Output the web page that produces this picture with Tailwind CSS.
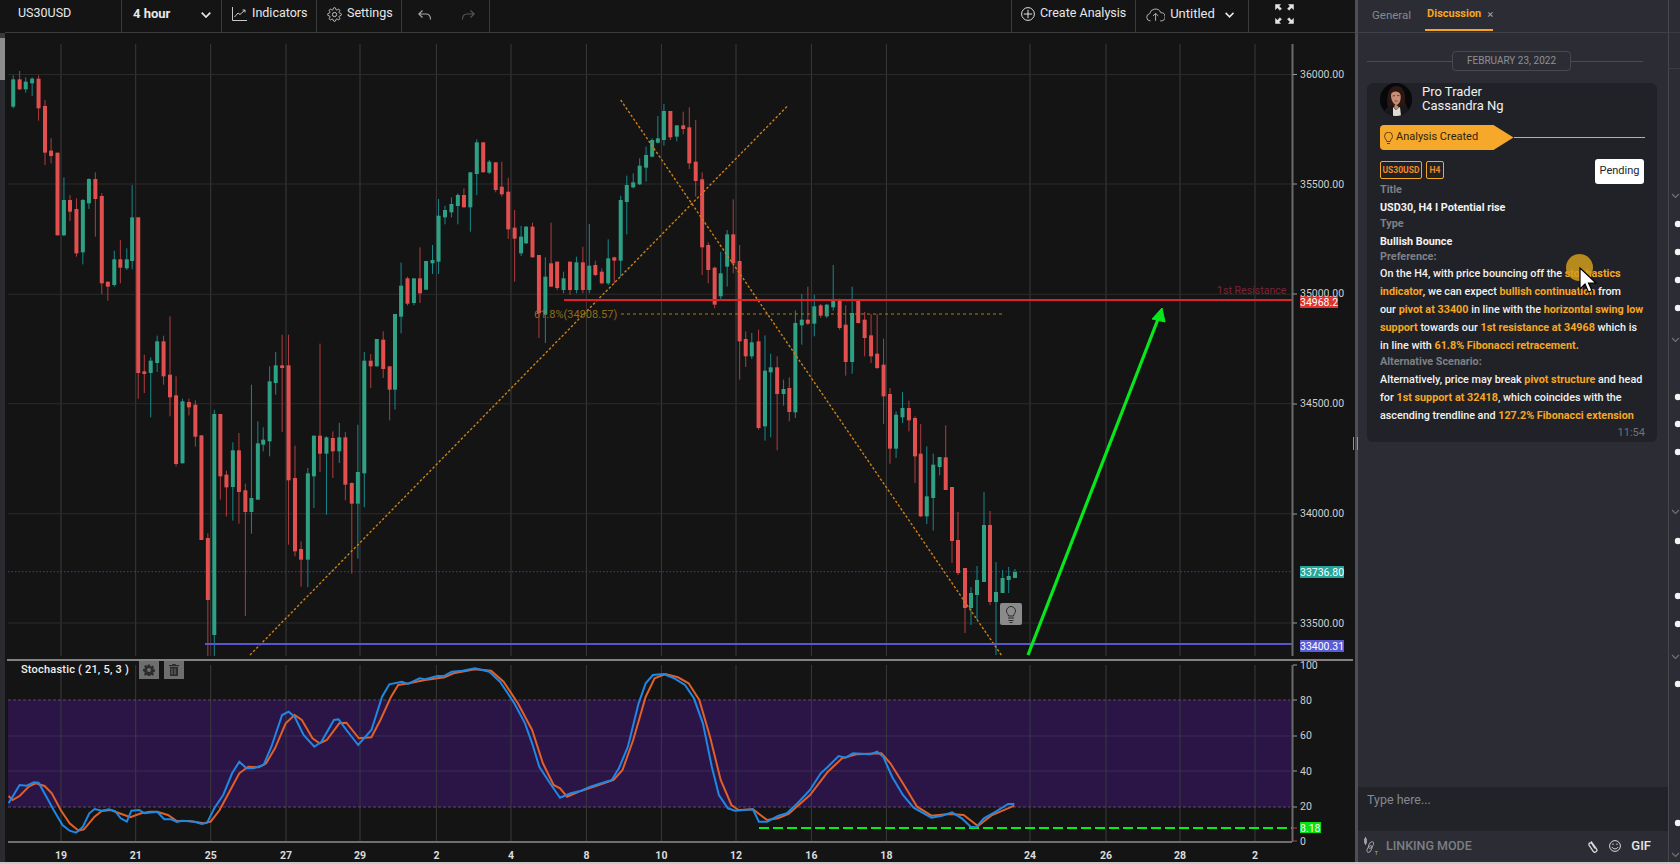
<!DOCTYPE html>
<html lang="en">
<head>
    <meta charset="UTF-8">
    <title>US30USD</title>
    <script src="https://cdn.jsdelivr.net/npm/@tailwindcss/browser@4"></script>
</head>
<body class="bg-[#141414] overflow-hidden font-[Roboto,sans-serif]">
<div class="relative flex w-[1680px] h-[864px] overflow-hidden">

    <!-- left rail -->
    <div class="w-[5px] flex flex-col">
        <div class="h-[33px] bg-[#141414]"></div>
        <div class="h-[5px] bg-[#3a3a3e]"></div>
        <div class="h-[42px] bg-[#8d8d8d]"></div>
        <div class="flex-1 bg-[#2a2b30]"></div>
    </div>

    <!-- chart column -->
    <div class="w-[1350px] flex flex-col">
        <header class="h-[33px] flex border-b border-[#3a3c3c] text-[12.500px] text-[#e8e8e8]">
            <div class="w-[117px] pl-[13px] pb-[5px] flex items-center border-r border-[#3a3c3c]">US30USD</div>
            <div class="w-[100px] pl-[11px] pr-[10px] pb-[3px] flex items-center justify-between border-r border-[#3a3c3c] font-bold text-[13px]">
                <span class="-mt-[2px]">4 hour</span>
                <svg width="10" height="6" viewBox="0 0 10 6" fill="none" stroke="#e8e8e8" stroke-width="1.700"><path d="M.7.7 5 5l4.300-4.300"/></svg>
            </div>
            <div class="w-[95px] pl-[10px] pb-[4px] flex items-center gap-[5px] border-r border-[#3a3c3c]">
                <svg width="15" height="14" viewBox="0 0 15 14" fill="none" stroke="#c8c8c8" stroke-width="1"><path d="M.5 0v13.500H15M2.500 10 6 6l2 1.500L13 3M10.500 3H13v2.500"/></svg>
                <span class="-mt-[1px]">Indicators</span>
            </div>
            <div class="w-[85px] pl-[10px] pb-[4px] flex items-center gap-[5px] border-r border-[#3a3c3c]">
                <svg width="15" height="15" viewBox="0 0 24 24" fill="none" stroke="#c8c8c8" stroke-width="1.600"><circle cx="12" cy="12" r="3.400"/><path d="M19.400 15a1.700 1.700 0 0 0 .3 1.800l.1.1a2 2 0 1 1-2.900 2.900l-.1-.1a1.700 1.700 0 0 0-2.800 1.200v.1a2 2 0 1 1-4 0V21a1.700 1.700 0 0 0-2.900-1.200l-.1.1a2 2 0 1 1-2.800-2.900l.1-.1a1.700 1.700 0 0 0-1.200-2.900H3a2 2 0 1 1 0-4h.1a1.700 1.700 0 0 0 1.200-2.800l-.1-.1a2 2 0 1 1 2.900-2.900l.1.1a1.700 1.700 0 0 0 1.800.3H9a1.700 1.700 0 0 0 1-1.500V3a2 2 0 1 1 4 0v.1a1.700 1.700 0 0 0 2.900 1.200l.1-.1a2 2 0 1 1 2.800 2.900l-.1.1a1.700 1.700 0 0 0-.3 1.800V9a1.700 1.700 0 0 0 1.500 1H21a2 2 0 1 1 0 4h-.1a1.700 1.700 0 0 0-1.500 1z"/></svg>
                <span class="-mt-[1px]">Settings</span>
            </div>
            <div class="w-[88px] pl-[16px] pb-[3px] flex items-center gap-[31px] border-r border-[#3a3c3c]">
                <svg width="13" height="10" viewBox="0 0 13 10" fill="none" stroke="#a8a8a8" stroke-width="1.100"><path d="M4.500.5.8 4l3.700 3.500M.8 4H8c2.800 0 4.500 2 4.500 5.500"/></svg>
                <svg width="13" height="10" viewBox="0 0 13 10" fill="none" stroke="#565656" stroke-width="1.100"><path d="M8.500.5 12.200 4 8.500 7.500M12.200 4H5C2.200 4 .5 6 .5 9.500"/></svg>
            </div>
            <div class="flex-1"></div>
            <div class="w-[124px] pl-[9px] pb-[4px] flex items-center gap-[5px] border-l border-[#3a3c3c]">
                <svg width="14" height="14" viewBox="0 0 14 14" fill="none" stroke="#e0e0e0" stroke-width="1"><circle cx="7" cy="7" r="6.400"/><path d="M7 2.800v8.400M2.800 7h8.400"/></svg>
                <span class="-mt-[1px]">Create Analysis</span>
            </div>
            <div class="w-[113px] pl-[10px] pr-[14px] pb-[4px] flex items-center border-l border-[#3a3c3c] text-[13px]">
                <svg width="21" height="15" viewBox="0 0 21 15" fill="none" stroke="#c0c0c0" stroke-width="1"><path d="M5 14.500H4.500A4 4 0 0 1 4 6.600 6.400 6.400 0 0 1 16.200 5.500 4.500 4.500 0 0 1 16.500 14.500H15.500M10.500 14.500V6.500M7.700 9 10.500 6.300 13.300 9"/></svg>
                <span class="ml-[5px] -mt-[1px]">Untitled</span>
                <svg class="ml-[10px] mt-[2px]" width="10" height="6" viewBox="0 0 10 6" fill="none" stroke="#e8e8e8" stroke-width="1.700"><path d="M.7.7 5 5l4.300-4.300"/></svg>
            </div>
            <div class="w-[107px] pl-[26px] pb-[4px] flex items-center border-l border-[#3a3c3c]">
                <svg width="19" height="20" viewBox="0 0 19 20" fill="#e4e4e4" stroke="#e4e4e4" stroke-width=".5">
                    <path d="M.5.5h5L4 2.200 6.500 4.800 5 6.300 2.400 3.800.5 5.500zM18.500.5h-5L15 2.200l-2.500 2.600L14 6.300l2.600-2.500 1.900 1.700zM.5 19.500h5L4 17.800l2.500-2.600L5 13.700l-2.600 2.500-1.900-1.700zM18.500 19.500h-5l1.500-1.700-2.500-2.600 1.500-1.500 2.600 2.500 1.900-1.700z"/>
                </svg>
            </div>
        </header>

        <div class="relative flex-1">
            <svg id="chart" class="block" width="1350" height="831" viewBox="5 33 1350 831">
                <rect x="8" y="700" width="1284" height="107" fill="#2b1546"/>
                <g id="grid"></g>
                <path d="M8 700H1290M8 807H1290" stroke="#5d4a62" stroke-width="1.200" stroke-dasharray="3 2" fill="none"/>
                <path d="M8 736H1290M8 771H1290" stroke="#3f2a58" stroke-width="1"/>
                <path d="M8 571.700H1292" stroke="#4a3f8f" stroke-width="1" stroke-dasharray="1.500 2"/>
                <g id="candles"></g>
                <path d="M250 655 787.500 106M620.700 100 1002 656" stroke="#cc8015" stroke-width="1.400" stroke-dasharray="2.500 2" fill="none"/>
                <path d="M621 314H1002" stroke="#a87c1c" stroke-width="1" stroke-dasharray="3 3"/>
                <path d="M564 300H1292" stroke="#e0202a" stroke-width="1.800"/>
                <path d="M205 644H1292" stroke="#5a55d0" stroke-width="2"/>
                <path d="M1028 655 1160 314" stroke="#06e81c" stroke-width="3.200" fill="none"/>
                <path d="M1152 319 1162 308 1165 322z" fill="#06e81c" stroke="#06e81c"/>
                <path d="M759 828H1293" stroke="#06ee14" stroke-width="2" stroke-dasharray="10 4"/>
                <g id="stoch"></g>
                <path d="M1292.500 44V656M1292.500 665V842" stroke="#6a6a6a" stroke-width="2"/>
                <path d="M8 842H1292" stroke="#6f6f6f" stroke-width="2"/>
                <path d="M7 660H1353" stroke="#f0f0f0" stroke-width="1.200"/>
                <path d="M1293 74.500h4M1293 184h4M1293 294h4M1293 404h4M1293 514h4M1293 623h4M1293 665h4M1293 700h4M1293 736h4M1293 771h4M1293 807h4" stroke="#999"/>
                <path d="M1293 828h4M1293 841h4" stroke="#c8382f"/>
                <rect x="1000" y="603" width="22" height="22" rx="2" fill="#8b8b8b"/>
                <path d="M1008 618h6M1008.500 620.500h5M1009.500 622.500h3M1008.500 616c0-2-2-2.500-2-5a4.500 4.500 0 0 1 9 0c0 2.500-2 3-2 5z" fill="none" stroke="#222" stroke-width=".9"/>
                <rect x="1300" y="296" width="38" height="12" fill="#de3330"/>
                <rect x="1300" y="566" width="44" height="12" fill="#26a69a"/>
                <rect x="1300" y="640" width="44" height="12" fill="#5b5bd6"/>
                <rect x="1300" y="822" width="21" height="11" fill="#06e014"/>
                <g class="text-[10.500px] fill-[#cfcfcf]">
                    <text x="1300" y="78">36000.00</text>
                    <text x="1300" y="188">35500.00</text>
                    <text x="1300" y="297">35000.00</text>
                    <text x="1300" y="407">34500.00</text>
                    <text x="1300" y="517">34000.00</text>
                    <text x="1300" y="627">33500.00</text>
                    <text x="1300" y="669">100</text>
                    <text x="1300" y="704">80</text>
                    <text x="1300" y="739">60</text>
                    <text x="1300" y="775">40</text>
                    <text x="1300" y="810">20</text>
                    <text x="1300" y="845">0</text>
                </g>
                <g class="text-[10.500px] fill-white">
                    <text x="1300" y="306">34968.2</text>
                    <text x="1300" y="575.500">33736.80</text>
                    <text x="1300" y="649.500">33400.31</text>
                    <text x="1300" y="831.500">8.18</text>
                </g>
                <text x="1217" y="294" class="text-[10.600px] fill-[#7d2338]">1st Resistance</text>
                <text x="534" y="318" class="text-[11px] fill-[#8f6c18]">61.8%(34908.57)</text>
                <g id="dates" class="text-[10.500px] font-bold fill-[#dcdcdc]" text-anchor="middle"></g>
            </svg>

            <div class="absolute left-[16px] top-[628px] flex items-center gap-[5px]">
                <span class="w-[113px] text-[11px] font-medium tracking-[0.2px] text-[#f0f0f0]">Stochastic ( 21, 5, 3 )</span>
                <div class="w-[20px] h-[18px] bg-[#6e6e6e] flex items-center justify-center">
                    <svg width="12" height="12" viewBox="0 0 24 24" fill="#2c2c2c"><path d="M10 1h4l.6 3.200 2 .8 2.700-1.800 2.800 2.800-1.800 2.700.8 2 3.200.6v4l-3.200.6-.8 2 1.800 2.700-2.800 2.800-2.700-1.800-2 .8-.6 3.200h-4l-.6-3.200-2-.8-2.700 1.800-2.800-2.800 1.800-2.700-.8-2L0 14v-4l3.200-.6.8-2L2.200 4.700 5 1.900l2.700 1.800 2-.8zM12 8a4 4 0 1 0 0 8 4 4 0 0 0 0-8z"/></svg>
                </div>
                <div class="w-[20px] h-[18px] bg-[#6e6e6e] flex items-center justify-center">
                    <svg width="10" height="12" viewBox="0 0 10 12" fill="#2c2c2c"><path d="M3.500 0h3l.5 1h3v1.200H0V1h3zM1 3h8v9H1zm1.500 1.500v6h1v-6zm3 0v6h1v-6z" fill-rule="evenodd"/></svg>
                </div>
            </div>
        </div>
    </div>

    <!-- discussion panel -->
    <aside class="w-[314px] flex flex-col bg-[#2c2d34] border-l-[3px] border-[#4d4f55]">
        <div class="h-[33px] px-[14px] flex gap-[14px] border-b border-[#3f4147] text-[11.500px]">
            <span class="pt-[7px] text-[#858990]">General</span>
            <div class="w-[68px] pl-[2px] pt-[6px] flex gap-[6px] border-b-2 border-[#f5a623] h-[31px]">
                <span class="text-[11px] font-bold text-[#f5a623]">Discussion</span>
                <span class="text-[#a0a3a8]">×</span>
            </div>
        </div>

        <div class="flex-1 px-[9px] pt-[18px]">
            <div class="flex items-center h-[20px] w-[276px]">
                <div class="w-[85px] h-px bg-[#4a4c53]"></div>
                <div class="w-[119px] h-[20px] pb-px flex items-center justify-center border border-[#464952] rounded-[4px] text-[10px] text-[#8d9096]">FEBRUARY 23, 2022</div>
                <div class="flex-1 h-px bg-[#4a4c53]"></div>
            </div>

            <div class="mt-[13px] w-[290px] h-[359px] bg-[#212227] rounded-[6px] pl-[13px] pr-[12px]">
                <div class="flex items-center gap-[10px] -mt-px">
                    <svg class="rounded-full" width="32" height="33" viewBox="0 0 32 33">
                        <rect width="32" height="33" fill="#08080a"/>
                        <path d="M8 24C6 15 8 3 16 3c8 0 10 8 9 15 0 4 3 7 3 10l-8 2z" fill="#2c1812"/>
                        <path d="M11 12c0-4 8-5 9.500 0 .7 4-.5 9-4 10-3.500-1-5.500-5-5.500-10z" fill="#c98e78"/>
                        <path d="M12.500 13l2.500-.4M17 12.600l2.500 0" stroke="#40201a" stroke-width=".7"/>
                        <path d="M14.500 18h3" stroke="#a33a44" stroke-width="1"/>
                        <path d="M3 33c1-7 5-10 10-11l3 4 5-4c5 1 8 4 9 11z" fill="#17181c"/>
                        <path d="M13 24l3 3 4-3 1 9h-8z" fill="#e3dcd5"/>
                        <path d="M15 21l4 3-2 3-3-2z" fill="#c08670"/>
                    </svg>
                    <div class="-mt-[2px] text-[13px] leading-[14px] text-[#f0f0f0]">Pro Trader<br>Cassandra Ng</div>
                </div>

                <div class="mt-[9px] flex items-center">
                    <div class="w-[135px] h-[25px] bg-[#f5a82a] pl-[4px] flex items-center gap-[3px] rounded-l-[4px] [clip-path:polygon(0_0,85%_0,100%_50%,85%_100%,0_100%)] text-[11px] text-[#2c2310]">
                        <svg width="9" height="12" viewBox="0 0 9 12" fill="none" stroke="#3a2c10" stroke-width=".8"><path d="M3 11.500h3M2.800 9.500h3.400M2.800 9.500C2.800 7.500.5 6.800.5 4.200a4 4 0 0 1 8 0C8.500 6.800 6.200 7.500 6.200 9.500"/></svg>
                        <span>Analysis Created</span>
                    </div>
                    <div class="w-[133px] h-px bg-[#f5a82a]"></div>
                </div>

                <div class="mt-[9px] flex justify-between items-start">
                    <div class="mt-[2px] flex gap-[4px] text-[8.500px] font-bold text-[#f08a24]">
                        <span class="w-[42px] h-[18px] flex items-center justify-center border border-[#f5a623] rounded-[2px]">US30USD</span>
                        <span class="w-[18px] h-[18px] flex items-center justify-center border border-[#f5a623] rounded-[2px]">H4</span>
                    </div>
                    <span class="w-[49px] h-[25px] mr-px flex items-center justify-center bg-white rounded-[3px] text-[11px] text-[#23242a]">Pending</span>
                </div>

                <div class="text-[10.800px] font-medium leading-[18px] whitespace-nowrap text-[#f2f2f2]">
                    <div class="-mt-px h-[14px] leading-[14px] font-bold text-[#7d8086]">Title</div>
                    <div class="mt-[2px] font-bold">USD30, H4 I Potential rise</div>
                    <div class="h-[14px] leading-[14px] font-bold text-[#7d8086]">Type</div>
                    <div class="mt-[2px] font-bold">Bullish Bounce</div>
                    <div class="-mt-px h-[14px] leading-[14px] font-bold text-[#7d8086]">Preference:</div>
                    <div class="mt-px">On the H4, with price bouncing off the <b class="text-[#f5a623]">stochastics</b></div>
                    <div><b class="text-[#f5a623]">indicator</b>, we can expect <b class="text-[#f5a623]">bullish continuation</b> from</div>
                    <div>our <b class="text-[#f5a623]">pivot at 33400</b> in line with the <b class="text-[#f5a623]">horizontal swing low</b></div>
                    <div><b class="text-[#f5a623]">support</b> towards our <b class="text-[#f5a623]">1st resistance at 34968</b> which is</div>
                    <div>in line with <b class="text-[#f5a623]">61.8% Fibonacci retracement.</b></div>
                    <div class="h-[14px] leading-[14px] font-bold text-[#7d8086]">Alternative Scenario:</div>
                    <div class="mt-[2px]">Alternatively, price may break <b class="text-[#f5a623]">pivot structure</b> and head</div>
                    <div>for <b class="text-[#f5a623]">1st support at 32418</b>, which coincides with the</div>
                    <div>ascending trendline and <b class="text-[#f5a623]">127.2% Fibonacci extension</b></div>
                    <div class="-mt-[1px] text-right text-[11px] font-normal text-[#6d7178]">11:54</div>
                </div>
            </div>
        </div>

        <div class="h-[44px] bg-[#222328] pl-[9px] pt-[4px] text-[12.500px] text-[#858890]">Type here...</div>
        <div class="h-[33px] flex items-center pl-[6px] pr-[17px] pb-[3px]">
            <svg width="15" height="18" viewBox="0 0 15 18" fill="none" stroke="#a0a2a6" stroke-width=".9">
                <path d="M1.500 0v8" stroke-width="1"/><rect x="0.500" y="2" width="2" height="4" fill="#a0a2a6"/>
                <ellipse cx="7" cy="8" rx="2" ry="3.500" transform="rotate(30 7 8)"/><ellipse cx="5.500" cy="12" rx="2" ry="3.500" transform="rotate(30 5.500 12)"/>
                <text x="10.500" y="17.500" class="text-[6px] fill-[#a0a2a6]" stroke="none">T</text>
            </svg>
            <span class="ml-[7px] mt-px text-[12.500px] font-medium text-[#7c7f85]">LINKING MODE</span>
            <svg class="ml-auto" width="10" height="13" viewBox="0 0 10 13" fill="none" stroke="#d8d8d8" stroke-width="1.300"><path d="M3 1.500 8.500 9a2 2 0 0 1-3.300 2.300L1.200 5.300A1.500 1.500 0 0 1 3.700 3.500L7 8.500"/></svg>
            <svg class="ml-[11px]" width="12" height="12" viewBox="0 0 12 12" fill="none" stroke="#d8d8d8" stroke-width="1"><circle cx="6" cy="6" r="5.400"/><path d="M3 7c1 2.500 5 2.500 6 0M4 3.500v1.500M8 3.500v1.500"/></svg>
            <span class="ml-[10px] text-[13px] font-medium text-[#e5e5e5]">GIF</span>
        </div>
    </aside>

    <!-- right rail -->
    <div id="rail" class="relative flex-1 bg-[#2c2d34] border-l border-[#45474d]">
        <svg width="11" height="864" viewBox="0 0 11 864" id="railmarks"></svg>
    </div>

    <!-- things lying over the page -->
    <div class="absolute left-[1353px] top-[437px] w-[5px] h-[13px] border-x border-[#c49420]"></div>
    <div class="absolute left-[1566px] top-[254px] w-[27px] h-[27px] rounded-full bg-[#d19c1c]/85"></div>
    <svg class="absolute left-[1579px] top-[267px]" width="20" height="30" viewBox="0 0 20 30">
        <path d="M1 1v21l5-5 3.500 8 3.500-1.500L9.500 16H17z" fill="#fff" stroke="#000" stroke-width="1.200"/>
    </svg>
    <div class="absolute left-0 top-[862px] w-[1680px] h-[2px] bg-[#c9c9c9]"></div>
</div>

<script>
    const NS = 'http://www.w3.org/2000/svg';
    function add(parent, tag, attrs, text) {
        const el = document.createElementNS(NS, tag);
        for (const k in attrs) el.setAttribute(k, attrs[k]);
        if (text) el.textContent = text;
        parent.appendChild(el);
        return el;
    }

    // grid
    const grid = document.getElementById('grid');
    const vLines = [61, 135.7, 210.7, 286, 360, 436.4, 511, 586.4, 661.4, 736, 811.4, 886.4, 1030, 1106, 1180, 1255];
    vLines.forEach(x => {
        add(grid, 'path', {d: `M${x} 44V656M${x} 665V842`, stroke: '#3a3a3a', 'stroke-width': 1});
    });
    [74.5, 184, 294.3, 403.7, 513.7, 623].forEach(y => {
        add(grid, 'path', {d: `M8 ${y}H1292`, stroke: '#2a2a2a', 'stroke-width': 1});
    });

    // candles, read off the picture: colour x bodyTop bodyBottom wickTop wickBottom
    const left = `g 37 238 320 226 325|r 55 238 268 213 270|g 72 245 268 232 278|g 90 236 250 232 288|r 108 236 325 226 362|r 126 318 458 300 495|r 143 452 468 415 490|r 161 458 706 458 706|g 179 600 706 532 708|r 196 600 635 585 663|r 214 627 760 595 770|g 232 600 757 597 793|g 249 537 610 535 627|r 267 537 597 517 710|r 285 588 850 580 882|r 302 845 860 845 902|g 320 778 855 752 860|r 337 778 803 720 850|g 355 778 805 745 810|g 370 652 783 555 808|r 387 652 1119 652 1196|r 404 1114 1122 1064 1179|g 422 1082 1119 1072 1252|g 440 1024 1089 1007 1116|r 458 1024 1129 1007 1154|r 476 1124 1192 949 1249|r 493 1186 1392 1129 1399|g 511 1204 1390 1196 1390|r 529 1206 1222 1196 1246|r 547 1214 1310 1201 1340|r 564 1306 1620 1306 1620|r 582 1614 1800 1600 1968|g 600 1242 1905 1229 1968|r 617 1242 1429 1242 1499|r 634 1424 1462 1412 1549|g 652 1351 1461 1327 1562|r 669 1351 1476 1299 1571|r 687 1471 1536 1451 1848|g 704 1494 1536 1154 1601|g 722 1330 1499 1264 1499|g 737 1319 1334 1282 1354|g 755 1144 1324 1099 1369|g 772 1096 1149 1056 1184|r 790 1096 1104 1004 1296|r 808 1096 1441 1004 1634|r 826 1434 1654 1337 1669|r 843 1647 1679 1624 1760|g 862 1420 1679 1404 1761|g 879 1307 1429 1307 1524|r 896 1307 1361 1031 1416|g 914 1312 1361 1309 1544|r 932 1314 1354 1294 1434|g 950 1312 1354 1269 1389|r 967 1312 1454 1296 1501|r 985 1449 1511 1447 1721|g 1002 1416 1511 1274 1676|g 1020 1082 1420 1056 1522|r 1038 1082 1099 1062 1164|g 1055 1017 1099 1017 1099|r 1073 1019 1107 994 1134|r 1091 1099 1169 1099 1261|g 1106 942 1169 942 1229|g 1123 857 950 788 1000|r 1141 835 911 830 916|g 1159 835 909 835 916|r 1176 835 880 742 909|g 1193 783 869 783 869|g 1211 780 790 735 822|g 1228 647 785 597 822|g 1246 630 652 617 673|g 1264 612 637 592 652|g 1282 585 618 580 673|r 1299 585 622 565 622|g 1317 517 622 517 695|g 1335 427 522 418 585|r 1353 427 517 427 517|g 1370 485 518 480 522|r 1388 487 570 487 577|r 1405 560 583 485 590|r 1423 575 688 533 717|r 1441 683 716 630 845|g 1459 710 760 678 768|g 1473 680 730 678 732|r 1491 680 772 668 772|r 1509 765 940 765 1014|g 1527 830 944 772 1029|r 1543 790 860 668 860|r 1560 785 864 785 870`;
    const right = `g 10 835 870 815 880|r 28 785 870 785 885|g 46 787 870 770 880|r 64 787 870 740 880|g 82 797 870 672 880|r 99 795 825 782 828|r 117 815 850 805 853|g 135 775 850 718 855|r 152 772 782 770 850|g 170 600 782 587 830|g 187 555 606 527 703|g 205 547 562 520 565|g 223 497 553 475 555|g 241 465 503 440 545|g 258 420 470 415 472|g 274 415 428 348 430|g 291 333 420 312 437|r 309 333 412 333 420|g 327 376 410 376 424|r 345 376 387 335 403|r 362 382 490 322 507|r 380 485 543 360 590|r 398 538 742 517 825|r 415 735 810 727 850|r 433 803 914 800 925|g 450 820 889 755 899|g 468 703 800 690 860|r 485 703 790 598 820|r 503 783 1024 735 1139|r 520 1017 1069 994 1101|g 537 1027 1069 999 1077|r 556 1024 1284 989 1289|g 574 1112 1279 1006 1322|g 590 1102 1117 1061 1312|r 608 1102 1182 1069 1351|g 626 1167 1182 1139 1217|r 642 1164 1236 1132 1264|g 659 969 1237 931 1254|g 677 959 976 882 1034|r 694 959 971 860 975|g 712 919 971 884 1009|r 730 916 947 912 954|g 747 914 949 912 954|g 765 902 922 795 932|r 783 902 984 896 989|r 800 974 1086 916 1127|g 818 939 1086 860 1121|r 835 902 969 902 971|r 853 959 1014 936 1069|r 871 1006 1069 942 1089|r 888 1061 1104 942 1107|r 906 1094 1189 1016 1272|r 924 1182 1346 1164 1391|g 941 1244 1346 1234 1374|g 959 1224 1252 1176 1269|r 977 1224 1261 1202 1294|r 994 1254 1369 1249 1449|r 1010 1361 1549 1272 1551|g 1027 1489 1549 1339 1572|g 1045 1394 1494 1361 1592|g 1063 1371 1401 1371 1426|r 1080 1372 1470 1276 1470`;
    // the last ones are in plain pixels
    const tail = `r 952 487 541 487 563|r 958 540 573 512 575|r 965 568 608 568 633|g 971 593 608 587 625|g 977 580 595 566 620|g 984 525 582 492 582|r 990 525 602 511 605|g 996 592 602 562 655|g 1002.6 578 593 570 593|g 1008.7 576 580 567 593|g 1015 572 578 569 578`;

    const candles = document.getElementById('candles');
    function drawCandle(c, x, t, b, h, l) {
        const body = c === 'r' ? '#e14f4f' : '#2fa084';
        const wick = c === 'r' ? '#b03c40' : '#17888c';
        add(candles, 'rect', {x: x - 0.5, y: h, width: 1, height: l - h, fill: wick});
        add(candles, 'rect', {x: x - 2, y: t, width: 4, height: Math.max(b - t, 1), fill: body});
    }
    function parse(s) {
        return s.split('|').map(r => r.split(' ').map((v, i) => i ? parseFloat(v) : v));
    }
    parse(left).forEach(([c, x, t, b, h, l]) => drawCandle(c, x / 2.8, t / 3, b / 3, h / 3, l / 3));
    parse(right).forEach(([c, x, t, b, h, l]) => drawCandle(c, 560 + x / 2.8, t / 3, b / 3, h / 3, l / 3));
    parse(tail).forEach(([c, x, t, b, h, l]) => drawCandle(c, x, t, b, h, l));

    // stochastic
    const blue = [[24,490],[55,435],[75,437],[95,427],[108,428],[130,470],[150,510],[175,555],[195,572],[213,578],[232,560],[250,520],[265,507],[285,512],[305,508],[322,513],[338,535],[355,545],[368,512],[390,510],[405,520],[440,515],[460,538],[480,538],[495,546],[510,542],[545,545],[565,552],[580,548],[600,505],[625,465],[650,400],[670,365],[690,385],[710,385],[738,375],[760,320],[790,225],[808,215],[825,230],[850,285],[880,320],[900,305],[935,240],[948,238],[970,270],[1003,315],[1040,270],[1070,170],[1090,133],[1125,125],[1142,132],[1175,115],[1190,118],[1225,108],[1245,107],[1265,95],[1295,92],[1330,85],[1370,95],[1400,125],[1440,190],[1470,250],[1490,310],[1510,380],[1540,430],
        [1568,473],[1598,460],[1628,452],[1653,440],[1688,428],[1713,420],[1733,385],[1758,320],[1788,190],[1808,130],[1828,105],[1858,102],[1888,115],[1918,135],[1943,175],[1968,250],[1993,380],[2013,465],[2038,505],[2058,512],[2108,508],[2125,545],[2148,545],[2178,528],[2203,520],[2233,490],[2268,450],[2298,400],[2318,380],[2348,348],[2368,353],[2388,340],[2438,343],[2456,335],[2473,350],[2498,410],[2528,465],[2558,503],[2608,533],[2638,527],[2666,517],[2693,535],[2718,560],[2733,562],[2755,535],[2788,515],[2823,492],[2840,492]];
    const orange = [[24,468],[35,480],[55,468],[80,440],[100,430],[125,438],[145,460],[170,510],[195,550],[220,572],[235,568],[265,530],[285,513],[310,510],[340,522],[365,532],[395,520],[420,515],[440,515],[470,525],[495,543],[530,543],[570,550],[590,545],[615,510],[640,460],[670,400],[695,380],[725,382],[745,370],[770,325],[800,250],[825,225],[845,240],[875,295],[895,310],[915,300],[950,250],[970,248],[1005,295],[1040,292],[1065,240],[1095,170],[1115,135],[1145,130],[1190,120],[1245,112],[1270,100],[1330,88],[1375,92],[1410,125],[1450,190],[1490,270],[1520,370],[1550,435],
        [1568,445],[1588,470],[1628,452],[1668,438],[1718,420],[1743,390],[1773,300],[1808,170],[1833,115],[1863,102],[1898,112],[1928,130],[1958,180],[1988,290],[2018,420],[2048,495],[2068,510],[2108,508],[2148,540],[2178,535],[2208,522],[2268,465],[2318,395],[2358,355],[2398,343],[2468,340],[2493,370],[2528,430],[2568,500],[2608,527],[2658,522],[2698,525],[2738,558],[2778,525],[2840,497]];
    const stoch = document.getElementById('stoch');
    const toPts = a => a.map(([x, y]) => `${(x / 2.8).toFixed(1)},${(640 + y / 3).toFixed(1)}`).join(' ');
    add(stoch, 'polyline', {points: toPts(orange), fill: 'none', stroke: '#e0602a', 'stroke-width': 2});
    add(stoch, 'polyline', {points: toPts(blue), fill: 'none', stroke: '#1e88e5', 'stroke-width': 2});

    // date axis
    const dates = document.getElementById('dates');
    const labels = [[61,'19'],[135.7,'21'],[210.7,'25'],[286,'27'],[360,'29'],[436.4,'2'],[511,'4'],[586.4,'8'],[661.4,'10'],[736,'12'],[811.4,'16'],[886.4,'18'],[1030,'24'],[1106,'26'],[1180,'28'],[1255,'2']];
    labels.forEach(([x, t]) => add(dates, 'text', {x: x, y: 859}, t));

    // right rail marks
    const rail = document.getElementById('railmarks');
    [224, 252, 280, 308, 397, 424, 452, 541, 596, 624, 684, 823].forEach(y => {
        add(rail, 'circle', {cx: 9, cy: y, r: 3.2, fill: '#f4f4f4'});
    });
    [196, 340, 512, 657, 855].forEach(y => {
        add(rail, 'path', {d: `M3 ${y - 2}l3.500 3.500 3.500-3.500`, fill: 'none', stroke: '#6f7278', 'stroke-width': 1.2});
    });
    add(rail, 'path', {d: 'M0 32.500H11M0 68.500H11', stroke: '#3a3c42'});
</script>
</body>
</html>
